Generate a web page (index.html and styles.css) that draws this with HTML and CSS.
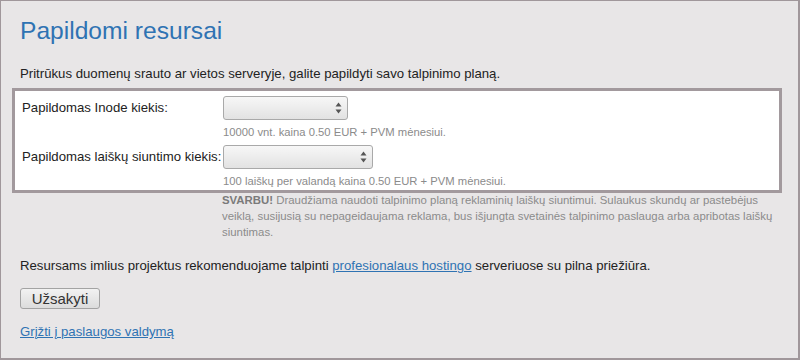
FILE: index.html
```html
<!DOCTYPE html>
<html lang="lt">
<head>
<meta charset="utf-8">
<title>Papildomi resursai</title>
<link rel="stylesheet" href="styles.css">
</head>
<body>
<div class="page">
  <h1 class="title">Papildomi resursai</h1>
  <p class="intro">Pritrūkus duomenų srauto ar vietos serveryje, galite papildyti savo talpinimo planą.</p>
  <div class="formbox">
    <div class="row">
      <label class="label">Papildomas Inode kiekis:</label>
      <div class="field">
        <div class="selectwrap w1">
          <select class="sel"><option></option></select>
          <svg class="arrows" width="7" height="12" viewBox="0 0 7 12"><path d="M3.5 0.5 L6.5 4.5 L0.5 4.5 Z M0.5 7.5 L6.5 7.5 L3.5 11.5 Z" fill="#555"/></svg>
        </div>
        <div class="hint">10000 vnt. kaina 0.50 EUR + PVM mėnesiui.</div>
      </div>
    </div>
    <div class="row">
      <label class="label">Papildomas laiškų siuntimo kiekis:</label>
      <div class="field">
        <div class="selectwrap w2">
          <select class="sel"><option></option></select>
          <svg class="arrows" width="7" height="12" viewBox="0 0 7 12"><path d="M3.5 0.5 L6.5 4.5 L0.5 4.5 Z M0.5 7.5 L6.5 7.5 L3.5 11.5 Z" fill="#555"/></svg>
        </div>
        <div class="hint last">100 laiškų per valandą kaina 0.50 EUR + PVM mėnesiui.</div>
      </div>
    </div>
  </div>
  <p class="warn"><b>SVARBU!</b> Draudžiama naudoti talpinimo planą reklaminių laiškų siuntimui. Sulaukus skundų ar pastebėjus<br>veiklą, susijusią su nepageidaujama reklama, bus išjungta svetainės talpinimo paslauga arba apribotas laiškų<br>siuntimas.</p>
  <p class="recommend">Resursams imlius projektus rekomenduojame talpinti <a href="#" class="link">profesionalaus hostingo</a> serveriuose su pilna priežiūra.</p>
  <button class="btn">Užsakyti</button>
  <p class="back"><a href="#" class="link">Grįžti į paslaugos valdymą</a></p>
</div>
</body>
</html>
```

FILE: styles.css
```css
html, body {
  margin: 0;
  padding: 0;
}
body {
  background: #e8e6e7;
  font-family: "Liberation Sans", Arial, sans-serif;
  color: #222;
}
.page {
  box-sizing: border-box;
  width: 800px;
  height: 360px;
  border-style: solid;
  border-color: #a0979b;
  border-width: 1px 2px 2px 1px;
  padding: 14px 16px 0 19px;
  overflow: hidden;
}
.title {
  margin: 0;
  font-size: 24.6px;
  font-weight: normal;
  line-height: 32px;
  color: #2f73b3;
}
.intro {
  margin: 18px 0 0 0;
  font-size: 13.2px;
  line-height: 18px;
}
.formbox {
  margin: 5px 0 0 -8px;
  background: #fff;
  border: 3px solid #a2999d;
  width: 757px;
  padding: 5px 0 1px 7px;
}
.row {
  display: flex;
}
.label {
  width: 201px;
  font-size: 13.2px;
  line-height: 18px;
  padding-top: 3px;
  white-space: nowrap;
}
.field {
  display: flex;
  flex-direction: column;
}
.selectwrap {
  position: relative;
  height: 24px;
}
.w1 { width: 125px; }
.w2 { width: 150px; }
.sel {
  -webkit-appearance: none;
  appearance: none;
  box-sizing: border-box;
  width: 100%;
  height: 24px;
  margin: 0;
  border: 1px solid #a9a9a9;
  border-radius: 3px;
  background: linear-gradient(#f7f7f7, #e2e2e2);
}
.arrows {
  position: absolute;
  right: 6px;
  top: 6px;
}
.hint {
  font-size: 11.25px;
  line-height: 16px;
  color: #8b8b8b;
  margin: 4px 0 5px 0;
}
.hint.last {
  margin-bottom: 0;
}
.warn {
  margin: -1px 0 0 202px;
  font-size: 11.4px;
  line-height: 16px;
  color: #8b8b8b;
  white-space: nowrap;
}
.warn b {
  color: #7a7a7a;
}
.recommend {
  margin: 17px 0 0 0;
  font-size: 13.2px;
  line-height: 18px;
}
.link {
  color: #2f73b3;
  text-decoration: underline;
}
.btn {
  display: block;
  margin-top: 13px;
  width: 80px;
  height: 21px;
  padding: 0;
  font-family: "Liberation Sans", Arial, sans-serif;
  font-size: 15px;
  color: #333;
  border: 1px solid #a3a3a3;
  border-radius: 3px;
  background: linear-gradient(#f2f2f2, #dcdcdc);
}
.back {
  margin: 14px 0 0 0;
  font-size: 13.2px;
  line-height: 18px;
}
```
